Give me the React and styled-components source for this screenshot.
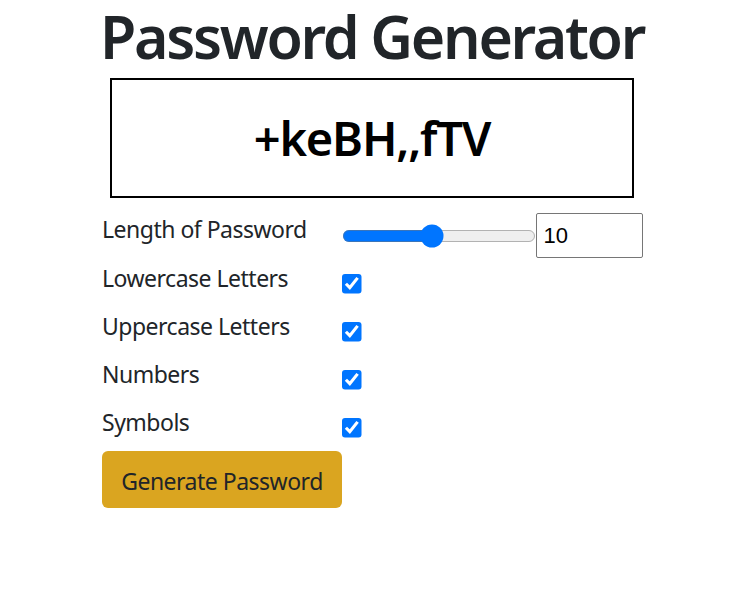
import React, { useState } from "react";
import styled, { createGlobalStyle } from "styled-components";

const GlobalStyle = createGlobalStyle`
  body {
    margin: 0;
    background: #fff;
    font-family: "Noto Sans", "Open Sans", sans-serif;
    color: #212529;
  }
`;

const Wrapper = styled.div`
  width: 540px;
  margin: 0 auto;
  padding: 4px 0 0 3px;
`;

const Title = styled.h1`
  margin: -3px -4px 6px;
  font-size: 59px;
  font-weight: 600;
  line-height: 71px;
  letter-spacing: -2.3px;
  white-space: nowrap;
  text-align: center;
  color: #212529;
`;

const Display = styled.div`
  margin: 0 8px 7px;
  height: 120px;
  box-sizing: border-box;
  border: 2px solid #000;
  display: flex;
  align-items: center;
  justify-content: center;
  font-size: 47px;
  font-weight: 600;
  letter-spacing: -1.2px;
  color: #000;
`;

const Row = styled.div`
  display: grid;
  grid-template-columns: 240px 1fr;
  height: ${(props) => (props.$first ? "49px" : "48px")};
`;

const Label = styled.label`
  font-size: 23px;
  line-height: 48px;
  letter-spacing: -0.5px;
  white-space: nowrap;
`;

const Controls = styled.div`
  display: flex;
  align-items: center;
  height: 45px;
  margin-top: 8px;
`;

const Range = styled.input`
  zoom: 1.5;
  width: 129px;
  margin: 0;
  accent-color: #0075ff;
`;

const NumberBox = styled.input`
  width: 107px;
  height: 45px;
  box-sizing: border-box;
  margin: 0;
  padding: 0 7px;
  border: 1px solid #767676;
  border-radius: 2px;
  font-family: "Liberation Sans", Arial, sans-serif;
  font-size: 22px;
  color: #000;
`;

const CheckCell = styled.div`
  padding-top: 20px;
`;

const Check = styled.input`
  zoom: 1.5;
  display: block;
  margin: 0;
  accent-color: #0075ff;
`;

const Button = styled.button`
  display: block;
  width: 240px;
  height: 57px;
  margin-top: 5px;
  padding: 3px 0 0;
  border: none;
  border-radius: 6px;
  background: #daa520;
  color: #212529;
  font-family: inherit;
  font-size: 23px;
  letter-spacing: -0.5px;
  cursor: pointer;
`;

const options = [
  "Lowercase Letters",
  "Uppercase Letters",
  "Numbers",
  "Symbols",
];

const App = () => {
  const [length, setLength] = useState(10);
  const [checks, setChecks] = useState(options.map(() => true));

  return (
    <Wrapper>
      <GlobalStyle />
      <Title>Password Generator</Title>
      <Display>+keBH,,fTV</Display>
      <Row $first>
        <Label>Length of Password</Label>
        <Controls>
          <Range
            type="range"
            min="4"
            max="17"
            value={length}
            onChange={(e) => setLength(Number(e.target.value))}
          />
          <NumberBox
            type="number"
            value={length}
            onChange={(e) => setLength(Number(e.target.value))}
          />
        </Controls>
      </Row>
      {options.map((name, i) => (
        <Row key={name}>
          <Label>{name}</Label>
          <CheckCell>
            <Check
              type="checkbox"
              checked={checks[i]}
              onChange={() =>
                setChecks(checks.map((c, j) => (j === i ? !c : c)))
              }
            />
          </CheckCell>
        </Row>
      ))}
      <Button>Generate Password</Button>
    </Wrapper>
  );
};

export default App;
